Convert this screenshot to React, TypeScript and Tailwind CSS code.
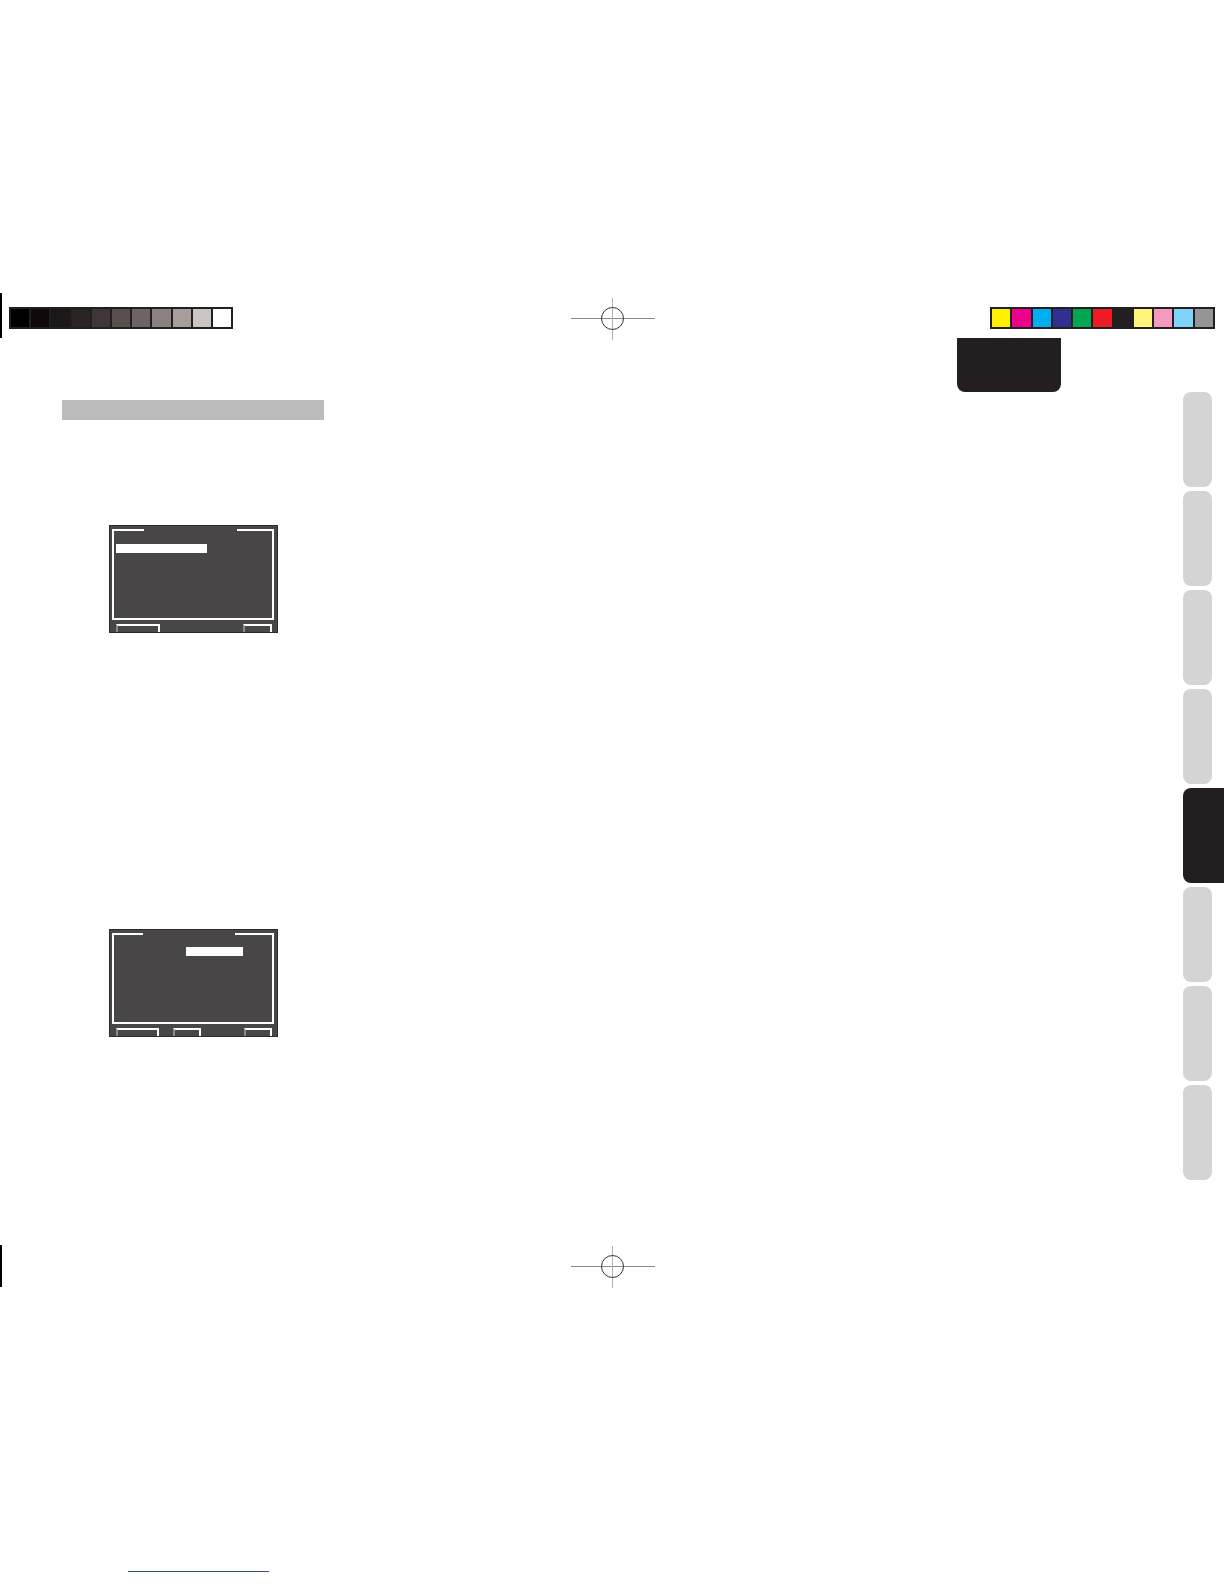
import React from "react";

const grays = [
  "#000000",
  "#0e0a09",
  "#1b1918",
  "#2a2423",
  "#3e3637",
  "#574f4e",
  "#6d6564",
  "#8a8280",
  "#a59e9b",
  "#cac6c4",
  "#ffffff",
];

const inks = [
  "#fff200",
  "#ec008c",
  "#00aeef",
  "#2e3192",
  "#00a651",
  "#ed1c24",
  "#231f20",
  "#fff57a",
  "#f49ac1",
  "#7fd3f7",
  "#959595",
];

const Swatches = ({ colors }: { colors: string[] }) => (
  <div className="flex gap-[2px] p-[2px] bg-[#231f20] h-[22px]">
    {colors.map((c, i) => (
      <div key={i} className="w-[18.4px] h-full" style={{ backgroundColor: c }} />
    ))}
  </div>
);

const CropMark = () => (
  <svg width="84" height="42" viewBox="0 0 84 42">
    <line x1="0" y1="20.5" x2="84" y2="20.5" stroke="#8a8a8a" strokeWidth="1" />
    <line x1="41.5" y1="0" x2="41.5" y2="42" stroke="#b0b0b0" strokeWidth="1" />
    <circle cx="41.5" cy="20.5" r="11" fill="none" stroke="#333" strokeWidth="1" />
  </svg>
);

type Btn = { left: number; width: number };

const Lcd = ({
  segL,
  segR,
  hlLeft,
  hlTop,
  hlWidth,
  buttons,
}: {
  segL: number;
  segR: number;
  hlLeft: number;
  hlTop: number;
  hlWidth: number;
  buttons: Btn[];
}) => (
  <div className="w-[169px] h-[108px] bg-[#484646] border border-[#2c2b2b] flex flex-col pt-[3px] pl-[2px] overflow-hidden">
    <div className="w-[162px] h-[91px] shrink-0 border-l-2 border-r-2 border-b-2 border-white flex flex-col">
      <div className="flex justify-between -mx-[2px]">
        <div className="h-[2px] bg-white" style={{ width: segL }} />
        <div className="h-[2px] bg-white" style={{ width: segR }} />
      </div>
      <div
        className="h-[9px] bg-white"
        style={{ marginLeft: hlLeft, marginTop: hlTop, width: hlWidth }}
      />
    </div>
    <div className="flex mt-[4px] h-[14px] shrink-0">
      {buttons.map((b, i) => (
        <div
          key={i}
          className="h-full border-t-2 border-r-2 border-l-2 border-t-white border-r-white border-l-[#8a8888]"
          style={{
            marginLeft: b.left,
            width: b.width,
          }}
        />
      ))}
    </div>
  </div>
);

export default function App() {
  return (
    <div className="relative w-[1224px] h-[1584px] bg-white overflow-hidden font-['Liberation_Sans',sans-serif]">
      {/* print marks */}
      <div className="absolute left-0 top-[293px] w-[2px] h-[45px] bg-black" />
      <div className="absolute left-0 top-[1245px] w-[2px] h-[42px] bg-black" />
      <div className="absolute left-[9px] top-[307px] w-[224px]">
        <Swatches colors={grays} />
      </div>
      <div className="absolute left-[990px] top-[307px] w-[225px]">
        <Swatches colors={inks} />
      </div>
      <div className="absolute left-[571px] top-[298px]">
        <CropMark />
      </div>
      <div className="absolute left-[571px] top-[1246px]">
        <CropMark />
      </div>

      {/* section header tab */}
      <div className="absolute left-[957px] top-[338px] w-[104px] h-[54px] bg-[#231f20] rounded-b-[8px]" />

      <div className="flex justify-between">
        {/* main column */}
        <div className="flex flex-col">
          <div className="mt-[400px] ml-[62px] w-[262px] h-[20px] bg-[#bcbcbc]" />
          <div className="mt-[105px] ml-[109px]">
            <Lcd
              segL={32}
              segR={37}
              hlLeft={2}
              hlTop={13}
              hlWidth={91}
              buttons={[
                { left: 4, width: 44 },
                { left: 83, width: 29 },
              ]}
            />
          </div>
          <div className="mt-[296px] ml-[109px]">
            <Lcd
              segL={31}
              segR={39}
              hlLeft={72}
              hlTop={12}
              hlWidth={57}
              buttons={[
                { left: 4, width: 43 },
                { left: 14, width: 28 },
                { left: 43, width: 28 },
              ]}
            />
          </div>
          <div className="mt-[534px] ml-[128px] w-[141px] h-px bg-[#3b4aa0]" />
        </div>

        {/* side index tabs */}
        <div className="flex flex-col gap-[4px] pt-[392px] w-[41px]">
          {[0, 1, 2, 3, 4, 5, 6, 7].map((i) =>
            i === 4 ? (
              <div key={i} className="h-[95px] w-[41px] bg-[#231f20] rounded-l-[8px]" />
            ) : (
              <div key={i} className="h-[95px] w-[29px] bg-[#d4d4d4] rounded-[8px]" />
            )
          )}
        </div>
      </div>
    </div>
  );
}
